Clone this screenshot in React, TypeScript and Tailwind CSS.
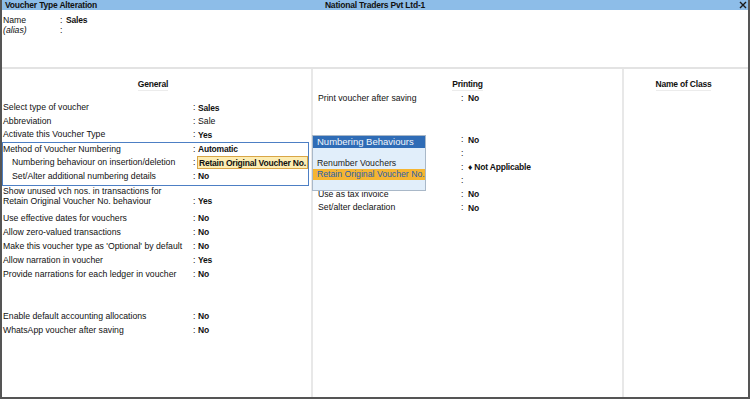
import React from 'react';

type Row = { label?: string; value?: string; bold?: boolean; h?: string; colon?: boolean };

const generalTop: Row[] = [
  { label: 'Select type of voucher', value: 'Sales', bold: true },
  { label: 'Abbreviation', value: 'Sale' },
  { label: 'Activate this Voucher Type', value: 'Yes', bold: true },
];

const generalBottom: Row[] = [
  { label: 'Use effective dates for vouchers', value: 'No', bold: true },
  { label: 'Allow zero-valued transactions', value: 'No', bold: true },
  { label: "Make this voucher type as 'Optional' by default", value: 'No', bold: true },
  { label: 'Allow narration in voucher', value: 'Yes', bold: true },
  { label: 'Provide narrations for each ledger in voucher', value: 'No', bold: true },
  { colon: false },
  { colon: false },
  { label: 'Enable default accounting allocations', value: 'No', bold: true },
  { label: 'WhatsApp voucher after saving', value: 'No', bold: true },
];

const printing: Row[] = [
  { label: 'Print voucher after saving', value: 'No', bold: true, h: 'h-[14px]' },
  { colon: false, h: 'h-[14px]' },
  { colon: false, h: 'h-[14px]' },
  { value: 'No', bold: true, h: 'h-[13.6px]' },
  { h: 'h-[13.6px]' },
  { value: '♦ Not Applicable', bold: true, h: 'h-[13.6px]' },
  { h: 'h-[13.6px]' },
  { label: 'Use as tax invoice', value: 'No', bold: true, h: 'h-[13.6px]' },
  { label: 'Set/alter declaration', value: 'No', bold: true, h: 'h-[13.6px]' },
];

function Value({ value, bold }: { value?: string; bold?: boolean }) {
  if (!value) return null;
  return bold ? (
    <span className="font-bold text-[8.5px] tracking-[-0.2px]">{value}</span>
  ) : (
    <span>{value}</span>
  );
}

function GeneralRow({ row, indent }: { row: Row; indent?: boolean }) {
  return (
    <div className="flex items-center h-[13.5px] leading-none">
      <div className={`w-[190px] shrink-0 ${indent ? 'pl-[9px]' : ''}`}>{row.label}</div>
      <div className="w-[5px] shrink-0">{row.colon === false ? '' : ':'}</div>
      <Value value={row.value} bold={row.bold} />
    </div>
  );
}

export default function App() {
  return (
    <div className="relative w-[750px] h-[399px] bg-white flex flex-col border-l-2 border-r-2 border-b-2 border-[#555] overflow-hidden text-[8.7px] text-[#111] font-['Liberation_Sans',Arial,sans-serif]">
      {/* Title bar */}
      <div className="h-[10px] shrink-0 bg-[#8dbde8] grid grid-cols-3 items-center leading-none font-bold text-[8.5px] tracking-[-0.2px]">
        <div className="pl-[3px]">Voucher Type Alteration</div>
        <div className="text-center">National Traders Pvt Ltd-1</div>
        <div className="flex justify-end pr-[1px]">
          <svg width="8" height="8" viewBox="0 0 8 8" className="text-[#1a1a1a]">
            <path d="M1 1 L7 7 M7 1 L1 7" stroke="currentColor" strokeWidth="1.4" />
          </svg>
        </div>
      </div>

      {/* Name block */}
      <div className="h-[57px] shrink-0 pt-[5px] pl-[1px]">
        <div className="flex items-center h-[10.5px] leading-none">
          <div className="w-[57px]">Name</div>
          <div className="w-[6px]">:</div>
          <span className="font-bold text-[8.5px] tracking-[-0.2px]">Sales</span>
        </div>
        <div className="flex items-center h-[10.5px] leading-none">
          <div className="w-[57px] italic">(alias)</div>
          <div className="w-[6px]">:</div>
        </div>
      </div>
      <div className="h-[2px] shrink-0 bg-[#e3e3e3]" />

      {/* Columns */}
      <div className="flex-1 flex">
        {/* General */}
        <div className="w-[309px] shrink-0 flex flex-col">
          <div className="pt-[9px] pr-[7px] text-center">
            <span className="inline-block leading-[12px] font-bold text-[8.5px] tracking-[-0.2px] border-b border-[#ececec]">
              General
            </span>
          </div>
          <div className="mt-[10px] pl-[1px]">
            {generalTop.map((r) => (
              <GeneralRow key={r.label} row={r} />
            ))}
          </div>
          <div className="mr-[2px] border border-[#4d7fc4] pb-[2px]">
            <GeneralRow row={{ label: 'Method of Voucher Numbering', value: 'Automatic', bold: true }} />
            <div className="flex items-center h-[13.5px] leading-none">
              <div className="w-[190px] shrink-0 pl-[9px]">Numbering behaviour on insertion/deletion</div>
              <div className="w-[4px] shrink-0">:</div>
              <div className="flex-1 h-[13px] flex items-center pl-[1px] bg-[#fdedb3] border border-[#d9a646]">
                <span className="font-bold text-[8.5px] tracking-[-0.2px]">Retain Original Voucher No.</span>
              </div>
            </div>
            <GeneralRow row={{ label: 'Set/Alter additional numbering details', value: 'No', bold: true }} indent />
          </div>
          <div className="pl-[1px] h-[24px] flex items-start pt-[0px] leading-[10px]">
            <div className="w-[190px] shrink-0">
              Show unused vch nos. in transactions for
              <br />
              Retain Original Voucher No. behaviour
            </div>
            <div className="w-[5px] shrink-0 pt-[10px]">:</div>
            <div className="pt-[10px]">
              <Value value="Yes" bold />
            </div>
          </div>
          <div className="pl-[1px] mt-[1px]">
            {generalBottom.map((r, i) => (
              <div key={i} className="flex items-center h-[14px] leading-none">
                <div className="w-[190px] shrink-0">{r.label}</div>
                <div className="w-[5px] shrink-0">{r.colon === false ? '' : ':'}</div>
                <Value value={r.value} bold={r.bold} />
              </div>
            ))}
          </div>
        </div>
        <div className="w-[2px] shrink-0 bg-[#e8e8e8]" />

        {/* Printing */}
        <div className="w-[309px] shrink-0 flex flex-col">
          <div className="pt-[9px] text-center">
            <span className="inline-block leading-[12px] font-bold text-[8.5px] tracking-[-0.2px] border-b border-[#ececec]">
              Printing
            </span>
          </div>
          <div className="pl-[5px]">
            {printing.map((r, i) => (
              <div key={i} className={`flex items-center ${r.h} leading-none`}>
                <div className="w-[143px] shrink-0">{r.label}</div>
                <div className="w-[7px] shrink-0">{r.colon === false ? '' : ':'}</div>
                <Value value={r.value} bold={r.bold} />
              </div>
            ))}
          </div>
        </div>
        <div className="w-[2px] shrink-0 bg-[#e8e8e8]" />

        {/* Name of Class */}
        <div className="flex-1 flex flex-col">
          <div className="pt-[9px] pr-[5px] text-center">
            <span className="inline-block leading-[12px] font-bold text-[8.5px] tracking-[-0.2px] border-b border-[#ececec]">
              Name of Class
            </span>
          </div>
        </div>
      </div>

      {/* Numbering Behaviours popup */}
      <div className="absolute left-[310px] top-[135px] w-[114px] border border-[#a9b8c8] bg-[#e1eefa] flex flex-col leading-none">
        <div className="h-[12px] bg-[#2f6cb6] text-[#f2f6fb] text-[9.5px] flex items-center pl-[4px]">
          Numbering Behaviours
        </div>
        <div className="h-[10px]" />
        <div className="h-[11px] flex items-center pl-[4px] text-[#1b1b1b]">Renumber Vouchers</div>
        <div className="h-[11px] flex items-center pl-[4px] bg-[#f5b531] text-[#2a5fae]">
          Retain Original Voucher No.
        </div>
        <div className="h-[10px]" />
      </div>
    </div>
  );
}
